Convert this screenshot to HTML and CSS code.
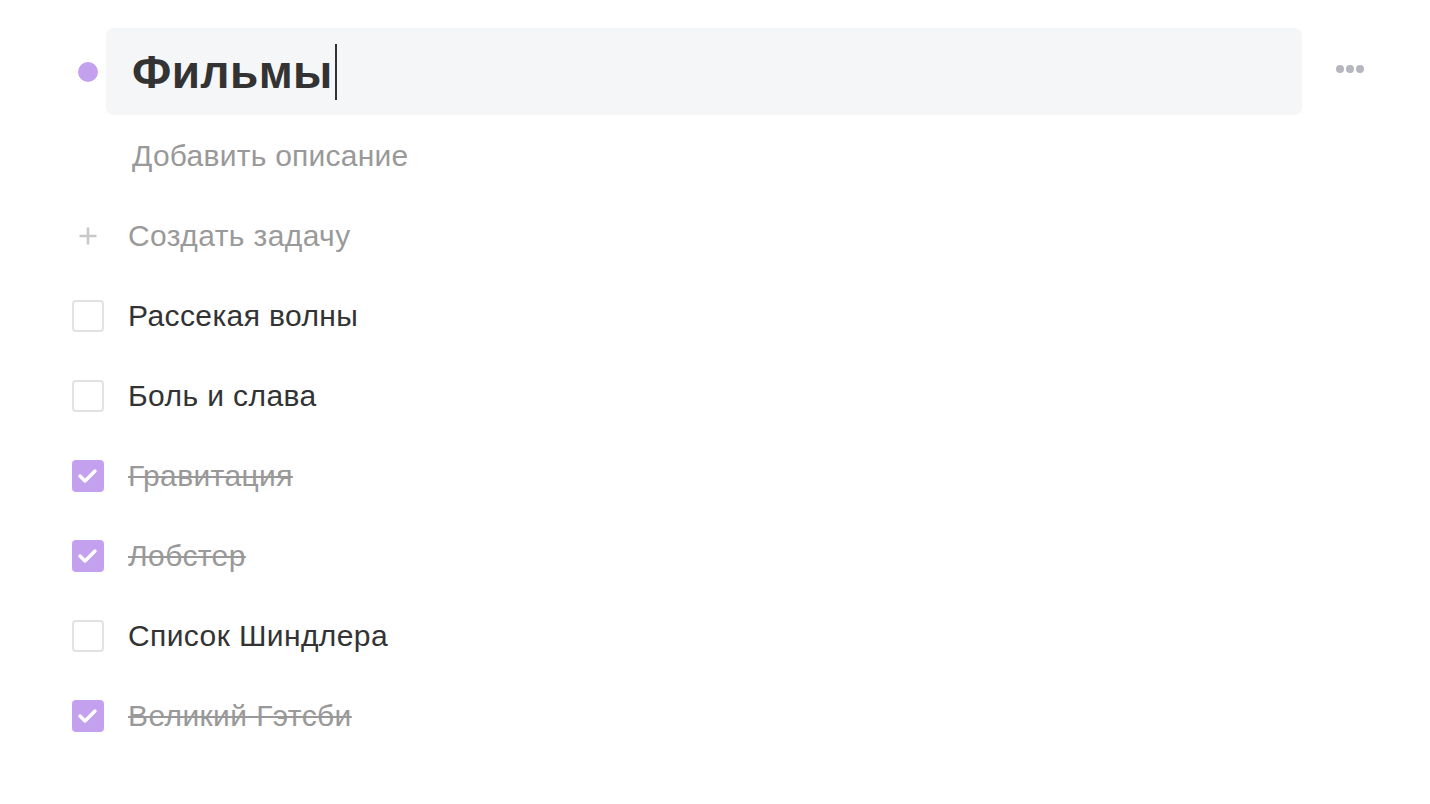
FILE: index.html
```html
<!DOCTYPE html>
<html lang="ru">
<head>
<meta charset="utf-8">
<title>Фильмы</title>
<link rel="stylesheet" href="styles.css">
</head>
<body>
<div class="page">
  <div class="header">
    <span class="dot"></span>
    <div class="title-box">
      <span class="title">Фильмы</span><span class="caret"></span>
    </div>
    <div class="more">
      <span></span><span></span><span></span>
    </div>
  </div>
  <div class="desc">Добавить описание</div>
  <ul class="tasks">
    <li class="task add">
      <span class="plus">
        <svg width="20" height="20" viewBox="0 0 20 20"><path d="M10 1.5v17M1.5 10h17" stroke="#c8c8c8" stroke-width="2.6"/></svg>
      </span>
      <span class="label">Создать задачу</span>
    </li>
    <li class="task"><span class="box"></span><span class="label">Рассекая волны</span></li>
    <li class="task"><span class="box"></span><span class="label">Боль и слава</span></li>
    <li class="task done"><span class="box"><svg width="28" height="28" viewBox="0 0 28 28"><path d="M6 14l5 5 10-10" fill="none" stroke="#fff" stroke-width="3.4" stroke-linecap="round" stroke-linejoin="round"/></svg></span><span class="label">Гравитация</span></li>
    <li class="task done"><span class="box"><svg width="28" height="28" viewBox="0 0 28 28"><path d="M6 14l5 5 10-10" fill="none" stroke="#fff" stroke-width="3.4" stroke-linecap="round" stroke-linejoin="round"/></svg></span><span class="label">Лобстер</span></li>
    <li class="task"><span class="box"></span><span class="label">Список Шиндлера</span></li>
    <li class="task done"><span class="box"><svg width="28" height="28" viewBox="0 0 28 28"><path d="M6 14l5 5 10-10" fill="none" stroke="#fff" stroke-width="3.4" stroke-linecap="round" stroke-linejoin="round"/></svg></span><span class="label">Великий Гэтсби</span></li>
  </ul>
</div>
</body>
</html>
```

FILE: styles.css
```css
* { box-sizing: border-box; }
html, body { margin: 0; padding: 0; background: #fff; }
body { font-family: "Liberation Sans", Arial, sans-serif; color: #333; }
.page { padding: 28px 0 0 72px; width: 1430px; }
.header { display: flex; align-items: center; height: 87px; }
.dot { width: 20px; height: 20px; border-radius: 50%; background: #c4a1ef; margin: 0 8px 0 6px; flex: none; }
.title-box { width: 1196px; height: 87px; background: #f5f6f8; border-radius: 8px; display: flex; align-items: center; padding-left: 26px; }
.title { font-size: 46px; font-weight: 700; color: #333; letter-spacing: 0.4px; }
.caret { width: 2px; height: 56px; background: #333; margin-left: 2px; }
.more { display: flex; gap: 2px; margin-left: 34px; margin-top: -6px; }
.more span { width: 8px; height: 8px; border-radius: 50%; background: #b6b6be; }
.desc { font-size: 30px; color: #999; margin: 23px 0 0 60px; line-height: 36px; letter-spacing: 0.25px; }
.tasks { list-style: none; margin: 44px 0 0; padding: 0; display: flex; flex-direction: column; gap: 44px; }
.task { display: flex; align-items: center; height: 36px; }
.label { font-size: 30px; line-height: 36px; margin-left: 24px; letter-spacing: 0.4px; }
.plus { width: 32px; display: flex; justify-content: center; }
.add .label { color: #9a9a9a; }
.box { width: 32px; height: 32px; border: 2px solid #e2e2e2; border-radius: 4px; flex: none; display: flex; align-items: center; justify-content: center; }
.done .box { background: #c4a1ef; border-color: #c4a1ef; }
.done .label { color: #999; text-decoration: line-through; text-decoration-thickness: 2px; }
```
